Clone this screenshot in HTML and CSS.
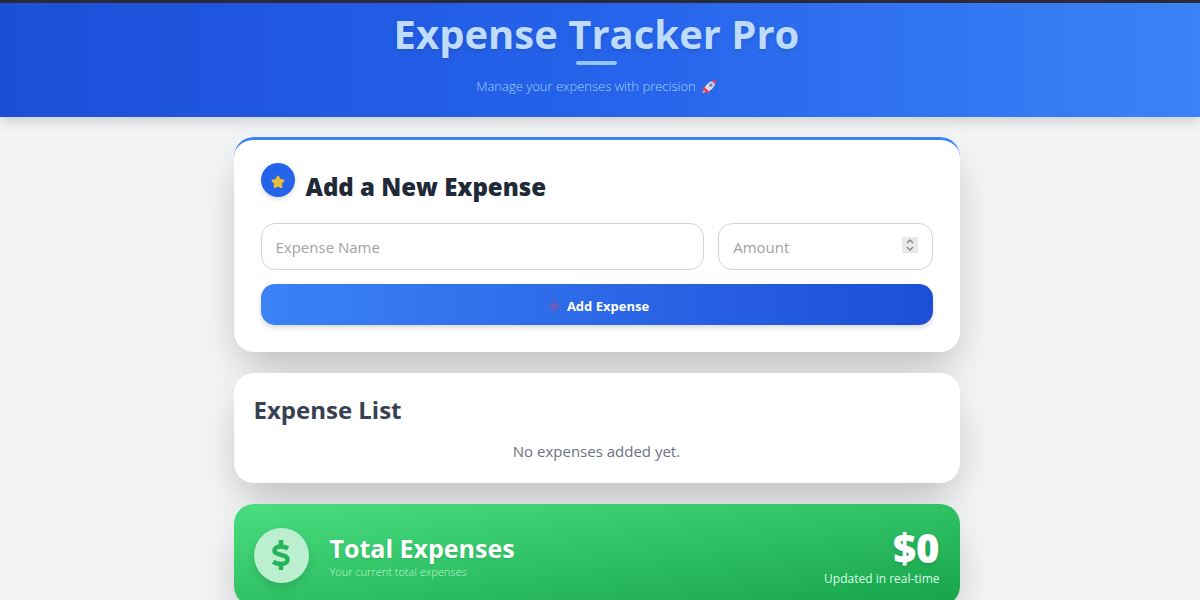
FILE: index.html
```html
<!DOCTYPE html>
<html lang="en">
<head>
<meta charset="utf-8">
<meta name="viewport" content="width=device-width, initial-scale=1">
<title>Expense Tracker Pro</title>
<link rel="stylesheet" href="styles.css">
</head>
<body>
<header class="header">
  <h1 class="header-title">Expense Tracker Pro</h1>
  <span class="header-rule"></span>
  <p class="header-tagline">Manage your expenses with precision
    <svg class="rocket" viewBox="0 0 32 32" aria-hidden="true">
      <path d="M10 13 4 16l-3 7 8-2zM19 22l-3 7-6 2 2-9z" fill="#e8455f"/>
      <path d="M7 22c-4 1-6 5-6 8 3 0 7-2 8-6z" fill="#ff9a5e"/>
      <path d="M6 19C9 10 17 4 26 4l2 2c0 9-6 17-15 20z" fill="#dcdcee"/>
      <path d="M21 5c3-2 6-3 9-3 0 3-1 6-3 9z" fill="#f0445c"/>
      <path d="M6 18l-2 4 6 6 4-2z" fill="#e0355a"/>
      <circle cx="19" cy="13" r="4" fill="#7d86b8"/>
    </svg>
  </p>
</header>
<main class="main">
  <section class="card card-form">
    <div class="form-heading">
      <span class="star-badge">
        <svg class="star" viewBox="0 0 24 24" aria-hidden="true"><path d="M12 3l2.800 5.600 6.200 1-4.400 4.400 1 6.400L12 17.500l-5.600 2.900 1-6.400L3 9.600l6.200-1z" fill="#e8bd3c" stroke="#e8bd3c" stroke-width="4" stroke-linejoin="round"/></svg>
      </span>
      <h2 class="form-title">Add a New Expense</h2>
    </div>
    <form class="form">
      <input class="field" type="text" placeholder="Expense Name" aria-label="Expense Name">
      <input class="field field-amount" type="number" placeholder="Amount" aria-label="Amount">
      <button class="submit" type="button">
        <svg class="plus" viewBox="0 0 12 12" aria-hidden="true"><path d="M6 0v12M0 6h12" stroke="#d0456f" stroke-width="1"/></svg>
        Add Expense
      </button>
    </form>
  </section>
  <section class="card card-list">
    <h2 class="list-title">Expense List</h2>
    <p class="list-empty">No expenses added yet.</p>
  </section>
  <section class="card card-total">
    <span class="coin">
      <svg class="dollar" viewBox="0 0 20 32" aria-hidden="true"><path d="M10 1v6M10 25v6M17 9.500C14.500 8 12 7.500 9.500 7.500 6 7.500 3.500 9 3.500 11.500c0 5.500 13 3 13 9 0 3-3 4.500-6.500 4.500-3 0-5.500-.8-8-2" fill="none" stroke="#26b45a" stroke-width="4.500"/></svg>
    </span>
    <div class="total-label">
      <h2 class="total-title">Total Expenses</h2>
      <p class="total-note">Your current total expenses</p>
    </div>
    <div class="total-value">
      <p class="amount">$0</p>
      <p class="amount-note">Updated in real-time</p>
    </div>
  </section>
</main>
</body>
</html>
```
FILE: styles.css
```css
* {
  box-sizing: border-box;
}

body {
  margin: 0;
  background: #f3f4f6;
  color: #1f2937;
  font-family: "Segoe UI", "Open Sans", "Noto Sans", sans-serif;
  font-size: 15px;
}

h1, h2, p {
  margin: 0;
}

.header {
  display: flex;
  flex-direction: column;
  align-items: center;
  padding: 4px 7px 20px 0;
  border-top: 3px solid #2a2b36;
  background: linear-gradient(to right, #1d4ed8, #2563eb 50%, #3b82f6);
  box-shadow: 0 4px 12px rgba(0, 0, 0, 0.16);
}

.header-title {
  color: #bfdbfe;
  font-size: 40px;
  font-weight: 700;
  line-height: 54px;
  text-shadow: 0 2px 4px rgba(0, 0, 0, 0.1);
}

.header-rule {
  width: 41px;
  height: 4px;
  border-radius: 2px;
  background: #93c5fd;
}

.header-tagline {
  display: flex;
  align-items: center;
  gap: 6px;
  margin-top: 10px;
  color: #a3cffe;
  font-size: 13px;
  font-weight: 300;
  line-height: 22px;
}

.rocket {
  width: 15px;
  height: 15px;
}

.main {
  display: flex;
  flex-direction: column;
  gap: 21px;
  max-width: 733px;
  margin: 0 auto;
  padding: 20px 7px 20px 0;
}

.card {
  border-radius: 20px;
  background: #fff;
  box-shadow: 0 20px 42px -8px rgba(0, 0, 0, 0.25);
}

.card-form {
  padding: 23px 27px 27px;
  border-top: 3px solid #3b82f6;
}

.form-heading {
  display: flex;
  gap: 11px;
}

.star-badge {
  display: grid;
  place-items: center;
  width: 34px;
  height: 34px;
  border-radius: 50%;
  background: #2563eb;
  box-shadow: 0 2px 5px rgba(0, 0, 0, 0.15);
}

.star {
  width: 14px;
  height: 14px;
  margin-top: 3px;
}

.form-title {
  padding-top: 6px;
  font-size: 24px;
  font-weight: 800;
  line-height: 36px;
}

.form {
  display: grid;
  grid-template-columns: 443fr 214fr;
  gap: 14px;
  margin-top: 18px;
}

.field {
  width: 100%;
  min-width: 0;
  height: 47px;
  padding: 0 14px;
  border: 1px solid #d1d5db;
  border-radius: 14px;
  background: #fff;
  color: #1f2937;
  font: inherit;
}

.field::placeholder {
  color: #9ca3af;
}

.field-amount::-webkit-inner-spin-button {
  width: 16px;
  height: 16px;
  appearance: none;
  background: #e9e9eb url("data:image/svg+xml,%3Csvg xmlns='http://www.w3.org/2000/svg' viewBox='0 0 16 16'%3E%3Cpath d='M5 6l3-3 3 3M5 10l3 3 3-3' fill='none' stroke='%23808084' stroke-width='1.300'/%3E%3C/svg%3E") center / 16px no-repeat;
  opacity: 1;
}

.submit {
  display: flex;
  grid-column: 1 / -1;
  align-items: center;
  justify-content: center;
  gap: 7px;
  height: 41px;
  padding: 2px 0 0 4px;
  border: 0;
  border-radius: 14px;
  background: linear-gradient(to right, #3b82f6, #1d4ed8);
  box-shadow: 0 3px 5px rgba(0, 0, 0, 0.14);
  color: #fff;
  font: inherit;
  font-size: 13px;
  font-weight: 700;
}

.plus {
  width: 12px;
  height: 12px;
}

.card-list {
  padding: 20px;
}

.list-title {
  color: #374151;
  font-size: 24px;
  font-weight: 700;
  line-height: 34px;
}

.list-empty {
  margin-top: 12px;
  color: #6b7280;
  line-height: 24px;
  text-align: center;
}

.card-total {
  display: flex;
  align-items: center;
  padding: 20px;
  background: linear-gradient(to bottom right, #4ade80, #16a34a);
  color: #fff;
}

.coin {
  display: grid;
  place-items: center;
  width: 55px;
  height: 55px;
  border-radius: 50%;
  background: #bbefcf;
  box-shadow: 0 5px 10px rgba(0, 0, 0, 0.12);
}

.dollar {
  width: 20px;
  height: 32px;
}

.total-label {
  flex: 1;
  margin-left: 21px;
}

.total-title {
  font-size: 25px;
  font-weight: 700;
  line-height: 34px;
  text-shadow: 0 1px 2px rgba(0, 0, 0, 0.1);
}

.total-note {
  color: #bbf7d0;
  font-size: 11px;
  font-weight: 300;
  line-height: 14px;
}

.total-value {
  text-align: right;
}

.amount {
  font-size: 40px;
  font-weight: 800;
  line-height: 48px;
  text-shadow: 0 2px 4px rgba(0, 0, 0, 0.1);
}

.amount-note {
  color: #dcfce7;
  font-size: 12px;
  line-height: 14px;
}
```
